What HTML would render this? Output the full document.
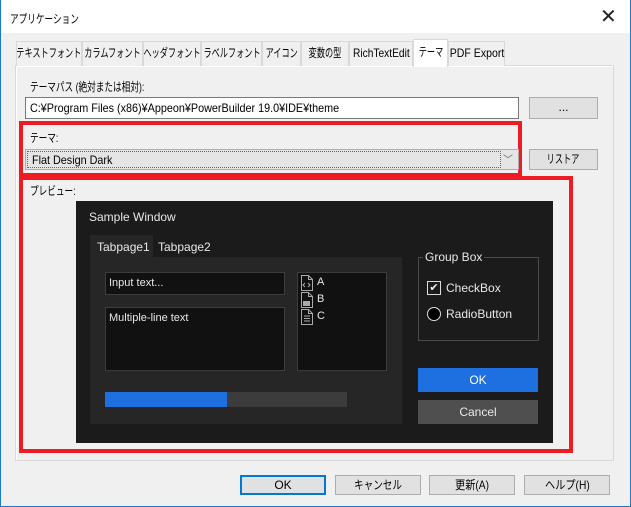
<!DOCTYPE html>
<html><head><meta charset="utf-8"><style>
*{box-sizing:border-box;margin:0;padding:0}
body{width:631px;height:507px;background:#f0f0f0;font-family:"Liberation Sans","Noto Sans CJK JP",sans-serif;font-size:12px;color:#000;position:relative;overflow:hidden}
.a{position:absolute}
.s{display:inline-block;transform:scaleX(.72);transform-origin:left center;white-space:nowrap}
.sc{display:inline-block;transform:scaleX(.68);white-space:nowrap;flex:none}
.win{left:0;top:0;width:631px;height:507px;border:1px solid #1979ca;border-top:none}
.title{left:1px;top:0;width:629px;height:33px;background:#fff}
.tab{top:41px;height:25px;background:#f0f0f0;border:1px solid #d9d9d9;border-bottom:none;font-size:12px;line-height:23px;display:flex;justify-content:center;white-space:nowrap}
.btn{background:#e1e1e1;border:1px solid #adadad;font-size:12px;display:flex;justify-content:center}
.red{border:4px solid #ed1c24}
.dk{color:#e8e8e8;font-size:12px}
</style></head><body>
<div class="a win"></div>
<div class="a title"></div>
<div class="a" style="left:10px;top:10px;font-size:12px"><span class="s">アプリケーション</span></div>
<div class="a" style="left:600px;top:4px;font-size:20px;font-weight:300;color:#222">✕</div>

<div class="a" style="left:15px;top:65px;width:599px;height:396px;background:#f0f0f0;border:1px solid #d9d9d9;box-shadow:inset 1px 1px 0 #fff"></div>
<div class="a tab" style="left:16px;width:66px"><span class="sc">テキストフォント</span></div>
<div class="a tab" style="left:82px;width:61px"><span class="sc">カラムフォント</span></div>
<div class="a tab" style="left:143px;width:58px"><span class="sc">ヘッダフォント</span></div>
<div class="a tab" style="left:201px;width:61px"><span class="sc">ラベルフォント</span></div>
<div class="a tab" style="left:262px;width:39px"><span class="sc">アイコン</span></div>
<div class="a tab" style="left:301px;width:48px"><span class="sc">変数の型</span></div>
<div class="a tab" style="left:349px;width:64px"><span class="sc" style="transform:scaleX(.85)">RichTextEdit</span></div>
<div class="a tab" style="left:413px;top:39px;height:28px;width:35px;background:#fff;border-color:#d9d9d9;line-height:24px"><span class="sc">テーマ</span></div>
<div class="a tab" style="left:448px;width:57px"><span class="sc" style="transform:scaleX(.88)">PDF Export</span></div>

<div class="a" style="left:30px;top:78px"><span class="s">テーマパス (絶対または相対):</span></div>
<div class="a" style="left:25px;top:97px;width:494px;height:22px;background:#fff;border:1px solid #7a7a7a;padding:3px 4px;font-size:12px"><span class="s" style="transform:scaleX(.9)">C:¥Program Files (x86)¥Appeon¥PowerBuilder 19.0¥IDE¥theme</span></div>
<div class="a btn" style="left:529px;top:97px;width:69px;height:22px;line-height:18px">...</div>

<div class="a red" style="left:19px;top:121px;width:503px;height:56px"></div>
<div class="a" style="left:30px;top:129px"><span class="s">テーマ:</span></div>
<div class="a" style="left:25px;top:149px;width:494px;height:21px;background:#e5e5e5;border:1px solid #adadad;padding:3px 6px;font-size:12px"><span class="s" style="transform:scaleX(.9)">Flat Design Dark</span><span style="position:absolute;right:5px;top:1px;color:#666;font-size:10px">﹀</span></div>
<div class="a" style="left:27px;top:151px;width:474px;height:17px;border:1px dotted #666"></div>
<div class="a btn" style="left:529px;top:149px;width:69px;height:21px;line-height:19px"><span class="sc">リストア</span></div>

<div class="a red" style="left:19px;top:176px;width:554px;height:277px"></div>
<div class="a" style="left:30px;top:182px"><span class="s">プレビュー:</span></div>

<div class="a" style="left:76px;top:201px;width:477px;height:242px;background:#1b1b1b"></div>
<div class="a dk" style="left:89px;top:210px">Sample Window</div>
<div class="a" style="left:90px;top:235px;width:63px;height:23px;background:#262626"></div>
<div class="a dk" style="left:97px;top:240px;font-size:12px">Tabpage1</div>
<div class="a dk" style="left:158px;top:240px;font-size:12px">Tabpage2</div>
<div class="a" style="left:90px;top:257px;width:312px;height:167px;background:#262626"></div>
<div class="a dk" style="left:105px;top:272px;width:180px;height:23px;background:#111;border:1px solid #3c3c3c;padding:4px 3px;font-size:11px">Input text...</div>
<div class="a dk" style="left:105px;top:307px;width:180px;height:64px;background:#111;border:1px solid #3c3c3c;padding:4px 3px;font-size:11px">Multiple-line text</div>
<div class="a" style="left:297px;top:272px;width:90px;height:99px;background:#111;border:1px solid #3c3c3c"></div>
<svg class="a" style="left:300px;top:275px" width="14" height="52" fill="none" stroke="#aaa" stroke-width="1">
<path d="M1.5 .5h7l4 4v11h-11z M8.5 .5v4h4"/><path d="M5 8l-2 2 2 2M8 8l2 2-2 2"/>
<path d="M1.5 17.5h7l4 4v11h-11z M8.5 17.5v4h4"/><rect x="3" y="26" width="7" height="5" fill="#aaa" stroke="none"/>
<path d="M1.5 34.5h7l4 4v11h-11z M8.5 34.5v4h4 M4 41h6M4 43.5h6M4 46h6"/>
</svg>
<div class="a dk" style="left:317px;top:276px;font-size:11px">A</div>
<div class="a dk" style="left:317px;top:293px;font-size:11px">B</div>
<div class="a dk" style="left:317px;top:310px;font-size:11px">C</div>
<div class="a" style="left:105px;top:392px;width:242px;height:15px;background:#3c3c3c"></div>
<div class="a" style="left:105px;top:392px;width:122px;height:15px;background:#1e6fe0"></div>

<div class="a" style="left:418px;top:257px;width:121px;height:84px;border:1px solid #4a4a4a"></div>
<div class="a dk" style="left:423px;top:250px;background:#1b1b1b;padding:0 2px">Group Box</div>
<div class="a" style="left:427px;top:281px;width:14px;height:14px;border:1px solid #ddd;color:#eee;font-size:11px;line-height:12px;text-align:center">✔</div>
<div class="a dk" style="left:446px;top:281px">CheckBox</div>
<div class="a" style="left:427px;top:307px;width:14px;height:14px;border:1px solid #ddd;border-radius:50%;background:#000"></div>
<div class="a dk" style="left:446px;top:307px">RadioButton</div>
<div class="a dk" style="left:418px;top:368px;width:120px;height:24px;background:#1e6fe0;text-align:center;line-height:24px;color:#fff">OK</div>
<div class="a dk" style="left:418px;top:400px;width:120px;height:24px;background:#4f4f4f;text-align:center;line-height:24px">Cancel</div>

<div class="a btn" style="left:240px;top:475px;width:86px;height:20px;line-height:16px;border:2px solid #0078d7">OK</div>
<div class="a btn" style="left:335px;top:475px;width:86px;height:20px;line-height:18px"><span class="sc" style="transform:scaleX(.8)">キャンセル</span></div>
<div class="a btn" style="left:429px;top:475px;width:86px;height:20px;line-height:18px"><span class="sc" style="transform:scaleX(.85)">更新(A)</span></div>
<div class="a btn" style="left:524px;top:475px;width:86px;height:20px;line-height:18px"><span class="sc" style="transform:scaleX(.85)">ヘルプ(H)</span></div>
</body></html>
